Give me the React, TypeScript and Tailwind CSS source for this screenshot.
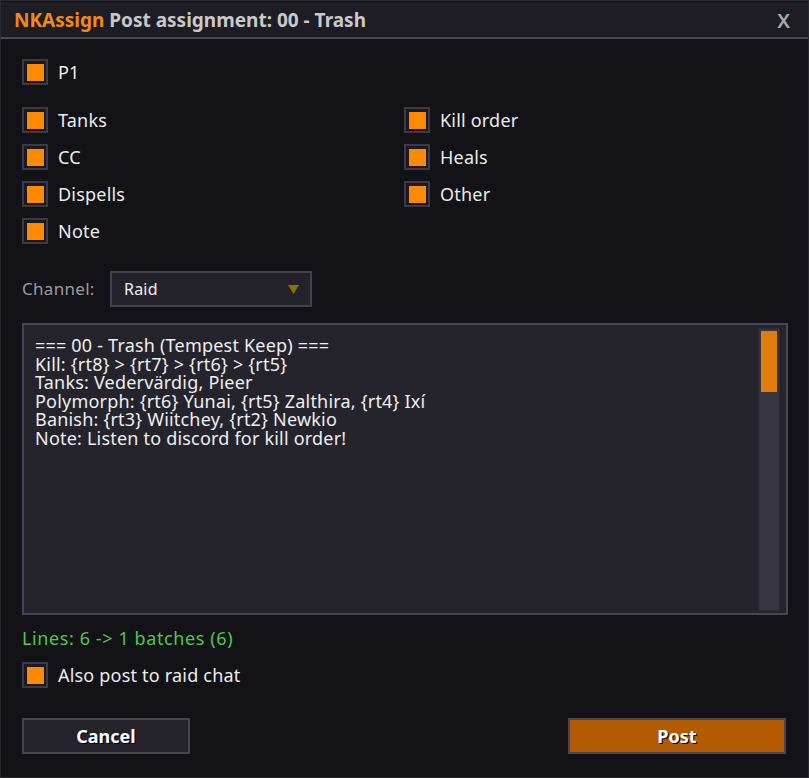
import React from "react"

const font = { fontFamily: '"Noto Sans", "DejaVu Sans", sans-serif' }

function Check({ label }: { label: string }) {
  return (
    <div className="flex h-[26px] items-center">
      <div className="flex h-[26px] w-[26px] shrink-0 items-center justify-center border-2 border-[#3b3b45] bg-[#1a1920]">
        <div className="h-[17px] w-[17px] bg-[#ff8a00]" />
      </div>
      <span className="ml-[10px] text-[18px] leading-[22px] tracking-[0.2px] text-[#ececec]">{label}</span>
    </div>
  )
}

const lines = [
  "=== 00 - Trash (Tempest Keep) ===",
  "Kill: {rt8} > {rt7} > {rt6} > {rt5}",
  "Tanks: Vedervärdig, Pieer",
  "Polymorph: {rt6} Yunai, {rt5} Zalthira, {rt4} Ixí",
  "Banish: {rt3} Wiitchey, {rt2} Newkio",
  "Note: Listen to discord for kill order!",
]

export default function App() {
  return (
    <div
      style={font}
      className="flex h-[778px] w-[809px] flex-col border border-[#2a2930] bg-[#131217]"
    >
      {/* title bar */}
      <div className="mt-[1px] flex h-[37px] shrink-0 items-center justify-between border-b-2 border-[#4a4957] bg-[#1e1d23] pl-[13px] pr-[18px] pt-[2px]">
        <div className="text-[19px] font-bold">
          <span className="text-[#f28a12]">NKAssign</span>{" "}
          <span className="text-[#c9c9cc]">Post assignment: 00 - Trash</span>
        </div>
        <span className="text-[20px] font-semibold leading-none text-[#a9a9ad]">X</span>
      </div>

      <div className="flex flex-1 flex-col pl-[21px] pr-[21px]">
        <div className="mt-[20px]">
          <Check label="P1" />
        </div>

        <div className="mt-[22px] grid grid-cols-[382px_1fr] gap-y-[11px]">
          <Check label="Tanks" />
          <Check label="Kill order" />
          <Check label="CC" />
          <Check label="Heals" />
          <Check label="Dispells" />
          <Check label="Other" />
          <Check label="Note" />
        </div>

        {/* channel picker */}
        <div className="mt-[27px] flex items-center">
          <span className="w-[88px] text-[17px] tracking-[0.3px] text-[#9b9b9f]">Channel:</span>
          <div className="flex h-[36px] w-[202px] items-center justify-between border-2 border-[#42414e] bg-[#24232b] pl-[12px] pr-[11px]">
            <span className="text-[16px] tracking-[0.2px] text-[#f0f0f0]">Raid</span>
            <svg width="11" height="9" viewBox="0 0 11 9">
              <path d="M0 0 H11 L5.5 9 Z" fill="#8c7400" />
            </svg>
          </div>
        </div>

        {/* message preview */}
        <div className="mt-[16px] flex h-[292px] w-[766px] shrink-0 border-2 border-[#474654] bg-[#25242c]">
          <div className="flex-1 pl-[11px] pt-[11px] text-[18px] leading-[18.6px] tracking-[0.2px] text-[#efefef]">
            {lines.map((l) => (
              <div key={l} className="whitespace-pre">
                {l}
              </div>
            ))}
          </div>
          <div className="mr-[6px] mt-[3px] mb-[2px] flex w-[22px] flex-col border border-[#2c2b34] bg-[#35343f] p-[2px]">
            <div className="h-[61px] bg-[#e27c0c]" />
          </div>
        </div>

        <div className="mt-[12px] text-[18px] leading-[22px] tracking-[0.6px] text-[#4fc84f]">
          Lines: 6 -&gt; 1 batches (6)
        </div>

        <div className="mt-[13px]">
          <Check label="Also post to raid chat" />
        </div>

        <div className="mt-[30px] flex justify-between">
          <button className="h-[36px] w-[168px] border-2 border-[#46454f] bg-[#25242c] text-[18px] font-bold text-white [text-shadow:1px_1px_0_#000]">
            Cancel
          </button>
          <button className="mr-[1px] h-[36px] w-[218px] border-2 border-[#4a4552] bg-[#b45a00] text-[18px] font-bold text-white [text-shadow:1px_1px_0_#000]">
            Post
          </button>
        </div>
      </div>
    </div>
  )
}
